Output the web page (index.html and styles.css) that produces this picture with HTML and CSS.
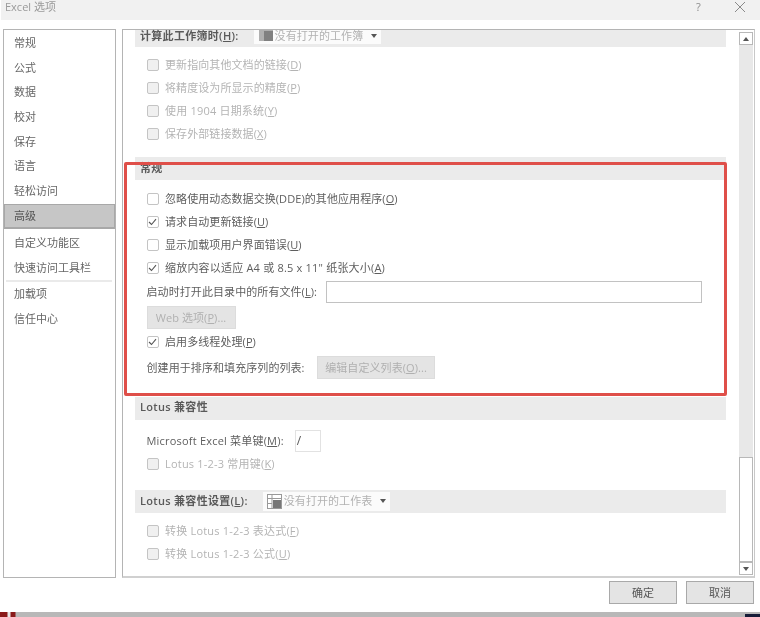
FILE: index.html
```html
<!DOCTYPE html>
<html lang="zh-CN">
<head>
<meta charset="utf-8">
<title>Excel 选项</title>
<link rel="stylesheet" href="styles.css">
</head>
<body>
<div class="dialog">
  <header class="titlebar">
    <span class="title">Excel 选项</span>
    <span class="help">?</span>
    <svg class="close" width="10" height="10" viewBox="0 0 10 10"><path d="M0 0L10 10M10 0L0 10" stroke="#8a8a8a" stroke-width="1" fill="none"/></svg>
  </header>
  <div class="body">
    <nav class="sidebar">
      <div class="nav-item">常规</div>
      <div class="nav-item">公式</div>
      <div class="nav-item">数据</div>
      <div class="nav-item">校对</div>
      <div class="nav-item">保存</div>
      <div class="nav-item">语言</div>
      <div class="nav-item">轻松访问</div>
      <div class="nav-item active">高级</div>
      <div class="nav-item custom">自定义功能区</div>
      <div class="nav-item">快速访问工具栏</div>
      <div class="nav-sep"></div>
      <div class="nav-item">加载项</div>
      <div class="nav-item">信任中心</div>
    </nav>
    <main class="panel">
      <div class="content">
        <div class="section first">
          <b>计算此工作簿时(<u>H</u>):</b>
          <span class="select sel-a"><svg class="book" width="14" height="11" viewBox="0 0 14 11"><rect width="14" height="11" fill="#b0b0b0"/><rect x="5" y="1" width="9" height="10" fill="#808080"/></svg>没有打开的工作簿<i class="caret"></i></span>
        </div>
        <div class="rows-a">
          <div class="row off"><i class="cb"></i>更新指向其他文档的链接(<u>D</u>)</div>
          <div class="row off"><i class="cb"></i>将精度设为所显示的精度(<u>P</u>)</div>
          <div class="row off latin"><i class="cb"></i>使用 1904 日期系统(<u>Y</u>)</div>
          <div class="row off"><i class="cb"></i>保存外部链接数据(<u>X</u>)</div>
        </div>
        <div class="section general"><b>常规</b></div>
        <div class="rows-b">
          <div class="row"><i class="cb"></i>忽略使用动态数据交换(DDE)的其他应用程序(<u>O</u>)</div>
          <div class="row"><i class="cb on"><svg width="9" height="8" viewBox="0 0 9 8"><path d="M1 4L3.5 6.5L8 1.2" stroke="#555" stroke-width="1.1" fill="none"/></svg></i>请求自动更新链接(<u>U</u>)</div>
          <div class="row"><i class="cb"></i>显示加载项用户界面错误(<u>U</u>)</div>
          <div class="row latin"><i class="cb on"><svg width="9" height="8" viewBox="0 0 9 8"><path d="M1 4L3.5 6.5L8 1.2" stroke="#555" stroke-width="1.1" fill="none"/></svg></i>缩放内容以适应 A4 或 8.5 x 11" 纸张大小(<u>A</u>)</div>
          <div class="row field startup"><span>启动时打开此目录中的所有文件(<u>L</u>):</span><span class="textbox"></span></div>
          <div class="row btn-row"><span class="btn web">Web 选项(<u>P</u>)...</span></div>
          <div class="row threads"><i class="cb on"><svg width="9" height="8" viewBox="0 0 9 8"><path d="M1 4L3.5 6.5L8 1.2" stroke="#555" stroke-width="1.1" fill="none"/></svg></i>启用多线程处理(<u>P</u>)</div>
          <div class="row field lists"><span>创建用于排序和填充序列的列表:</span><span class="btn edit">编辑自定义列表(<u>O</u>)...</span></div>
        </div>
        <div class="section lotus"><b>Lotus 兼容性</b></div>
        <div class="row field menu-key latin"><span>Microsoft Excel 菜单键(<u>M</u>):</span><span class="slash">/</span></div>
        <div class="row off latin"><i class="cb"></i>Lotus 1-2-3 常用键(<u>K</u>)</div>
        <div class="section lotus-set">
          <b>Lotus 兼容性设置(<u>L</u>):</b>
          <span class="select sel-b"><svg class="book" width="15" height="15" viewBox="0 0 15 15"><rect x=".5" y=".5" width="14" height="14" fill="#fff" stroke="#999"/><path d="M.5 4.5H14.5M.5 9.5H5M5 .5V14.5" stroke="#999" fill="none"/><rect x="6" y="6" width="8" height="8" fill="#777"/></svg>没有打开的工作表<i class="caret"></i></span>
        </div>
        <div class="rows-c">
          <div class="row off latin"><i class="cb"></i>转换 Lotus 1-2-3 表达式(<u>F</u>)</div>
          <div class="row off latin"><i class="cb"></i>转换 Lotus 1-2-3 公式(<u>U</u>)</div>
        </div>
      </div>
      <div class="scrollbar">
        <span class="sb-btn"><i class="up"></i></span>
        <span class="sb-track"></span>
        <span class="sb-thumb"></span>
        <span class="sb-btn"><i class="down"></i></span>
      </div>
    </main>
  </div>
  <footer class="footer">
    <span class="action">确定</span>
    <span class="action">取消</span>
  </footer>
  <div class="taskbar"></div>
  <div class="highlight"></div>
</div>
</body>
</html>
```

FILE: styles.css
```css
* { box-sizing: border-box; }
html, body { margin: 0; padding: 0; background: #fff; }
body { width: 760px; height: 617px; overflow: hidden; }
.dialog {
  position: relative;
  width: 760px;
  height: 617px;
  display: flex;
  flex-direction: column;
  font: 11px/16px "Open Sans", "Noto Sans CJK SC", sans-serif;
  color: #5c5c5c;
  filter: blur(0.45px);
}
.titlebar {
  height: 20px;
  margin-left: 1px;
  background: #f1f1f1;
  display: flex;
  align-items: center;
  padding: 0 15px 7px 4px;
  flex: none;
}
.title { color: #9a9a9a; flex: 1; line-height: 14px; }
.help { color: #8c8c8c; width: 39px; font-size: 11px; line-height: 12px; }
.close { display: block; }
.body {
  display: flex;
  gap: 6px;
  margin: 9px 5px 0 3px;
  height: 549px;
  flex: none;
}
.sidebar {
  width: 113px;
  border: 1px solid #b4b4b4;
  padding: 1px 0 0;
  background: #fff;
}
.nav-item {
  height: 24.7px;
  line-height: 24px;
  padding-left: 10px;
  color: #666;
}
.nav-item.active {
  height: 25px;
  background: #c6c6c6;
  border: 1px solid #a8a8a8;
  border-bottom-width: 2px;
  line-height: 22px;
  padding-left: 9px;
  color: #555;
}
.nav-item.custom { margin-top: 2px; }
.nav-sep { height: 2px; background: #eaeaea; margin: 0 3px 0 2px; }
.panel {
  flex: 1;
  border: 1px solid #b4b4b4;
  border-width: 1px 1px 2px 1px;
  border-right-color: #c8c8c8;
  border-bottom-color: #d0d0d0;
  display: flex;
  background: #fff;
  min-width: 0;
}
.content { width: 604px; padding-left: 12px; flex: none; letter-spacing: .08px; }
.section {
  width: 591px;
  background: #ebebeb;
  display: flex;
  align-items: center;
  padding-left: 5px;
  color: #5a5a5a;
}
.section b { font-weight: 600; letter-spacing: .3px; white-space: nowrap; }
.first { height: 17px; align-items: flex-start; }
.first b { line-height: 12px; }
.general { height: 23px; margin-top: 12px; padding-bottom: 2px; }
.lotus { height: 23px; margin-top: 12.5px; padding-bottom: 2px; }
.lotus-set { height: 23px; margin-top: 14.5px; }
.select {
  display: flex;
  align-items: center;
  color: #b2b2b2;
  letter-spacing: .08px;
}
.sel-a {
  margin-left: 15px;
  height: 14px;
  width: 127px;
  padding: 0 0 3px 5px;
  background: #fbfbfb;
  line-height: 12px;
}
.sel-b { margin-left: 15px; height: 19px; width: 127px; padding-left: 4px; background: #fbfbfb; }
.book { flex: none; margin-right: 2px; }
.caret {
  width: 0; height: 0;
  border: 3.5px solid transparent;
  border-top: 4px solid #555;
  border-bottom: 0;
  margin-left: auto;
  margin-right: 4px;
}
.row {
  height: 23px;
  display: flex;
  align-items: center;
  padding-left: 11.5px;
  white-space: nowrap;
  color: #5e5e5e;
}
.row.off { color: #b4b4b4; }
.row.latin { letter-spacing: .2px; }
.row u { text-underline-offset: 1px; text-decoration-thickness: 1px; }
.cb {
  width: 12px;
  height: 12px;
  border: 1px solid #c4c4c4;
  border-radius: 2px;
  margin-right: 6.5px;
  background: #fff;
  display: flex;
  align-items: center;
  justify-content: center;
  flex: none;
}
.row.off .cb { background: #f0f0f0; }
.rows-a { margin-top: 6px; }
.rows-b { margin-top: 7px; }
.field span:first-child { flex: none; }
.startup { height: 25px; }
.textbox {
  width: 376px;
  height: 22px;
  margin-left: 8.5px;
  border: 1px solid #c2c2c2;
  background: #fff;
}
.btn {
  background: #e4e4e4;
  border: 1px solid #dcdcdc;
  color: #b0b0b0;
  display: flex;
  align-items: center;
  justify-content: center;
}
.btn-row { height: 28px; padding-bottom: 1px; }
.threads { height: 19px; }
.web { width: 89px; height: 23px; }
.edit { width: 118px; height: 23px; margin-left: 12.5px; }
.lists { height: 33px; }
.menu-key { height: 23px; margin-top: 9.5px; }
.slash {
  width: 26px;
  height: 22px;
  margin-left: 11px;
  border: 1px solid #e2e2e2;
  padding-left: 1px;
  line-height: 20px;
  font-size: 12px;
  color: #555;
}
.rows-c { margin-top: 7.5px; }
.rows-c .row { height: 22.5px; }
.scrollbar {
  width: 14px;
  margin: 2px 0 1px 12px;
  background: #e8e8e8;
  display: flex;
  flex-direction: column;
  flex: none;
}
.sb-btn {
  height: 13px;
  background: #fff;
  border: 1px solid #b8b8b8;
  display: flex;
  align-items: center;
  justify-content: center;
  flex: none;
}
.sb-track { flex: 1; }
.sb-thumb { height: 105px; background: #fff; border: 1px solid #b8b8b8; flex: none; }
.up, .down { width: 0; height: 0; border: 3.5px solid transparent; }
.up { border-top: 0; border-bottom: 4px solid #555; }
.down { border-bottom: 0; border-top: 4px solid #555; }
.footer {
  height: 34px;
  display: flex;
  justify-content: flex-end;
  gap: 9px;
  padding: 3px 6px 0 0;
  flex: none;
}
.action {
  width: 68px;
  height: 23px;
  background: #e4e4e4;
  border: 1px solid #a9a9a9;
  display: flex;
  align-items: center;
  justify-content: center;
  color: #555;
}
.taskbar {
  height: 5px;
  flex: none;
  background:
    linear-gradient(#161c38, #161c38) right bottom / 15px 3px no-repeat,
    linear-gradient(90deg, #8a1a1a 0, #8a1a1a 7px, #e8e8e8 8px, #e8e8e8 10px, #8a1a1a 11px, #8a1a1a 15px, #b8b8b8 16px, #b8b8b8 100%);
}
.highlight {
  position: absolute;
  left: 124px;
  top: 162px;
  width: 603px;
  height: 234px;
  border: 3px solid #df4f49;
  border-radius: 2px;
  pointer-events: none;
}
```
